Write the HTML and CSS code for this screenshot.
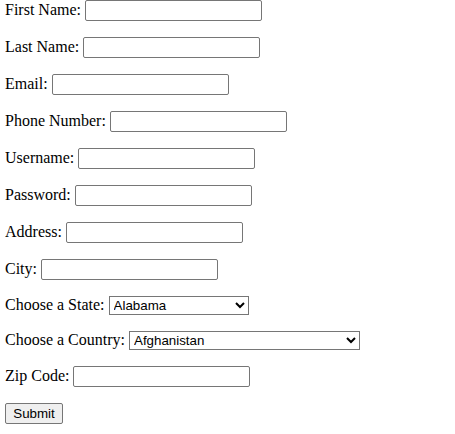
FILE: index.html
```html
<!DOCTYPE html>
<html>
<head>
<meta charset="utf-8">
<link rel="stylesheet" href="styles.css">
</head>
<body>
<form class="reg">
<p class="row">First Name: <input type="text" class="field w177"></p>
<p class="row">Last Name: <input type="text" class="field w177"></p>
<p class="row">Email: <input type="text" class="field w177"></p>
<p class="row">Phone Number: <input type="text" class="field w177"></p>
<p class="row">Username: <input type="text" class="field w177"></p>
<p class="row">Password: <input type="password" class="field w177"></p>
<p class="row">Address: <input type="text" class="field w177"></p>
<p class="row">City: <input type="text" class="field w177"></p>
<p class="row">Choose a State: <select class="pick state"><option>Alabama</option><option>Alaska</option><option>Arizona</option></select></p>
<p class="row">Choose a Country: <select class="pick country"><option>Afghanistan</option><option>Albania</option><option>Algeria</option></select></p>
<p class="row">Zip Code: <input type="text" class="field w177"></p>
<input type="submit" class="btn" value="Submit">
</form>
</body>
</html>
```
FILE: styles.css
```css
html, body {
  background: #ffffff;
}
body {
  margin: 0 5px;
  font-family: "Liberation Serif", "Times New Roman", serif;
  font-size: 16px;
  color: #000;
}
.reg {
  margin: 0;
}
.row {
  margin: 0 0 16px 0;
}
.field {
  font-family: "Liberation Sans", Arial, sans-serif;
  font-size: 13.3333px;
  box-sizing: border-box;
  height: 21px;
  padding: 1px 2px;
  border: 1px solid #767676;
  border-radius: 2px;
  margin: 0;
}
.w177 { width: 177px; }
.pick {
  font-family: "Liberation Sans", Arial, sans-serif;
  font-size: 13.3333px;
  box-sizing: border-box;
  height: 19px;
  border: 1px solid #767676;
  border-radius: 0;
  margin: 0;
  color: #000;
  background: #fff;
}
.state { width: 140px; }
.country { width: 231px; }
.btn {
  font-family: "Liberation Sans", Arial, sans-serif;
  font-size: 13.3333px;
  box-sizing: border-box;
  width: 58px;
  height: 21px;
  margin: 0;
  padding: 1px 6px;
  border: 1px solid #767676;
  border-radius: 2px;
  background: #efefef;
  color: #000;
}
```
